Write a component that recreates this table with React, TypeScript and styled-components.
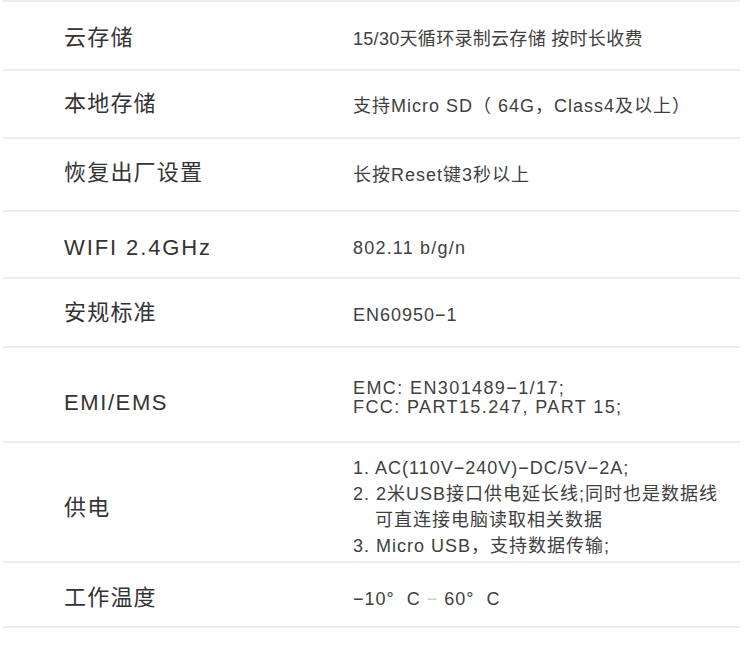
import React from "react";
import styled, { createGlobalStyle } from "styled-components";

const Global = createGlobalStyle`
  html, body { margin: 0; padding: 0; background: #ffffff; }
  body { font-family: "Liberation Sans", "Noto Sans CJK SC", sans-serif; }
`;

const Table = styled.div`
  width: 750px;
  display: flex;
  flex-direction: column;
`;

const Row = styled.div<{ $h: number; $top?: boolean }>`
  display: grid;
  grid-template-columns: 289px 1fr;
  align-items: center;
  height: ${(p) => p.$h}px;
  margin: 0 10px 0 3px;
  padding-left: 61px;
  border-bottom: 2px solid #ececec;
  ${(p) => (p.$top ? "border-top: 2px solid #ececec;" : "")}
`;

/* $dy: vertical nudge of a centred cell, in px (positive = down) */
const Label = styled.div<{ $dy?: number; $ls?: number }>`
  font-size: 22px;
  letter-spacing: ${(p) => p.$ls ?? 1.2}px;
  color: #333333;
  padding-top: ${(p) => Math.max(0, (p.$dy ?? 0) * 2)}px;
  padding-bottom: ${(p) => Math.max(0, -(p.$dy ?? 0) * 2)}px;
`;

const Value = styled.div<{ $lh?: number; $ls?: number; $dy?: number }>`
  font-size: 18px;
  letter-spacing: ${(p) => p.$ls ?? 1}px;
  color: #404040;
  line-height: ${(p) => p.$lh ?? 24}px;
  padding-top: ${(p) => Math.max(0, (p.$dy ?? 3) * 2)}px;
  padding-bottom: ${(p) => Math.max(0, -(p.$dy ?? 3) * 2)}px;
`;

const Indent = styled.div`
  padding-left: 22px;
`;

const Dim = styled.span`
  color: #cfcfcf;
`;

export default function App() {
  return (
    <>
      <Global />
      <Table>
        <Row $h={67} $top>
          <Label $dy={-1}>云存储</Label>
          <Value $ls={0.3}>15/30天循环录制云存储 按时长收费</Value>
        </Row>
        <Row $h={66}>
          <Label $dy={-3}>本地存储</Label>
          <Value $dy={2}>支持Micro SD（ 64G，Class4及以上）</Value>
        </Row>
        <Row $h={71}>
          <Label $dy={-5}>恢复出厂设置</Label>
          <Value $dy={0}>长按Reset键3秒以上</Value>
        </Row>
        <Row $h={65}>
          <Label $dy={3.5} $ls={1.9}>WIFI 2.4GHz</Label>
          <Value $ls={1.2}>802.11 b/g/n</Value>
        </Row>
        <Row $h={67}>
          <Label $dy={-3}>安规标准</Label>
          <Value $dy={2.5}>EN60950−1</Value>
        </Row>
        <Row $h={93}>
          <Label $dy={8.5} $ls={1.6}>EMI/EMS</Label>
          <Value $lh={19} $ls={1.4}>
            <div>EMC: EN301489−1/17;</div>
            <div>FCC: PART15.247, PART 15;</div>
          </Value>
        </Row>
        <Row $h={118}>
          <Label $dy={2.5}>供电</Label>
          <Value $lh={26} $dy={5}>
            <div>1. AC(110V−240V)−DC/5V−2A;</div>
            <div>2. 2米USB接口供电延长线;同时也是数据线</div>
            <Indent>可直连接电脑读取相关数据</Indent>
            <div>3. Micro USB，支持数据传输;</div>
          </Value>
        </Row>
        <Row $h={63}>
          <Label $dy={0}>工作温度</Label>
          <Value $dy={4.5}>
            −10°&nbsp; C <Dim>−</Dim> 60°&nbsp; C
          </Value>
        </Row>
      </Table>
    </>
  );
}
